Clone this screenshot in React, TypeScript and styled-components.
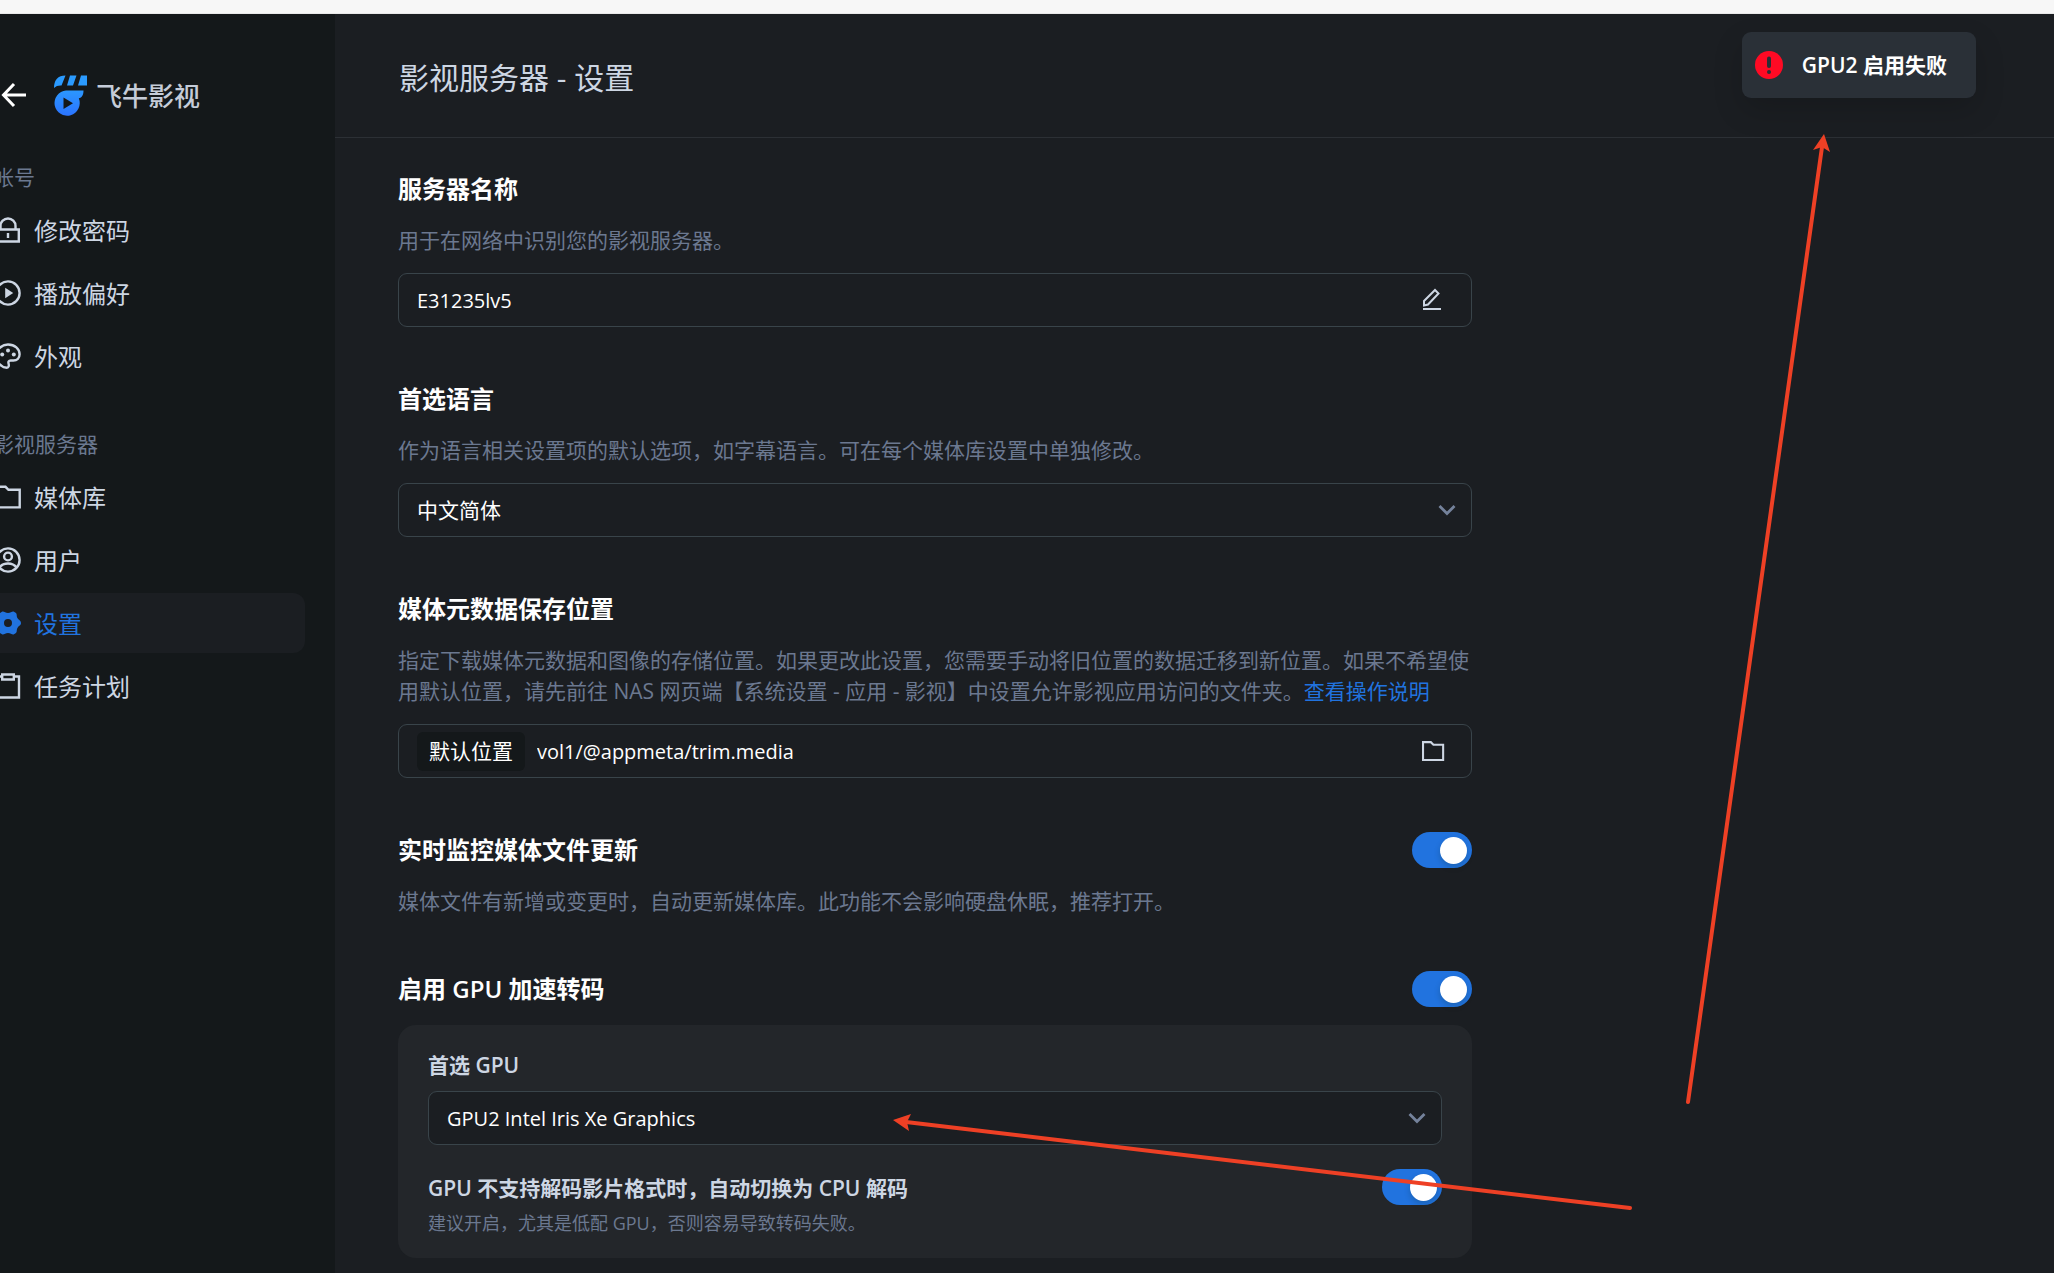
import React from "react";
import styled, { createGlobalStyle } from "styled-components";

const Global = createGlobalStyle`
  * { box-sizing: border-box; }
  body { margin: 0; background: #1b1e22; color: #fff; overflow: hidden;
    font-family: "Open Sans", "Noto Sans CJK SC", sans-serif; font-size: 21px; line-height: 31px; }
  h1, h2, p { margin: 0; }
`;

const Page = styled.div`
  position: relative;
  min-height: 100vh;
  display: flex;
  flex-direction: column;
`;
const TopStrip = styled.div`
  height: 14px;
  background: #f7f7f7;
  border-bottom: 1px solid #e9e9e9;
`;
const Shell = styled.div`
  flex: 1;
  display: flex;
  align-items: stretch;
`;
const Sidebar = styled.aside`
  flex: 0 0 335px;
  background: #14181a;
  overflow: hidden;
  padding-right: 30px;
`;
const Brand = styled.div`
  display: flex;
  align-items: center;
  height: 148px;
  padding-top: 14px;
`;
const IconButton = styled.button`
  display: flex;
  align-items: center;
  justify-content: center;
  flex: none;
  border: 0;
  padding: 0;
  background: none;
  color: #cdd6e3;
  cursor: pointer;
`;
const BackButton = styled(IconButton)`
  width: 28px;
  height: 28px;
  margin-right: 26px;
`;
const BrandName = styled.span`
  margin-left: 8px;
  padding-top: 3px;
  font-size: 26px;
  font-weight: 500;
  color: #c5ccd8;
`;
const Nav = styled.nav`
  display: flex;
  flex-direction: column;
  gap: 43px;
  margin-left: -25px;
`;
const NavGroup = styled.div`
  display: flex;
  flex-direction: column;
  gap: 3px;
`;
const NavLabel = styled.p`
  padding-left: 18px;
  margin-bottom: 4px;
  color: #6b7890;
`;
const NavItem = styled.a<{ $active?: boolean }>`
  display: flex;
  align-items: center;
  gap: 11px;
  height: 60px;
  padding-left: 18px;
  border-radius: 12px;
  font-size: 24px;
  text-decoration: none;
  color: ${(p) => (p.$active ? "#2173df" : "#cdd6e3")};
  background: ${(p) => (p.$active ? "#1b1e22" : "transparent")};
`;
const Main = styled.main`
  flex: 1;
  min-width: 0;
`;
const Header = styled.header`
  display: flex;
  align-items: center;
  height: 124px;
  padding: 4px 64px 0;
  border-bottom: 1px solid #2c3035;
`;
const Title = styled.h1`
  font-size: 30px;
  font-weight: 400;
  line-height: 44px;
  color: #cdd6e3;
`;
const Form = styled.form`
  display: flex;
  flex-direction: column;
  gap: 54px;
  max-width: 1200px;
  padding: 33px 63px 14px;
`;
const Section = styled.section`
  display: flex;
  flex-direction: column;
`;
const HeadRow = styled.div`
  display: flex;
  justify-content: space-between;
  align-items: center;
`;
const Heading = styled.label`
  font-size: 24px;
  font-weight: 600;
  line-height: 36px;
`;
const Desc = styled.p`
  margin-top: 18px;
  color: #6b7890;
`;
const Link = styled.a`
  color: #2173df;
  text-decoration: none;
`;
const Field = styled.div`
  display: flex;
  align-items: center;
  height: 54px;
  margin-top: 17px;
  padding: 0 25px 0 18px;
  border: 1px solid #39444a;
  border-radius: 9px;
  background: #1b1e22;
`;
const TextInput = styled.input`
  flex: 1;
  min-width: 0;
  height: 52px;
  padding: 0;
  border: 0;
  outline: 0;
  background: none;
  color: #fff;
  font: inherit;
  font-size: 20px;
`;
const SelectField = styled(Field)`
  padding: 0 13px 0 18px;
  color: #74829b;
`;
const NativeSelect = styled.select<{ $latin?: boolean }>`
  flex: 1;
  min-width: 0;
  height: 52px;
  padding: 0;
  border: 0;
  outline: 0;
  appearance: none;
  background: none;
  color: #fff;
  font: inherit;
  font-size: ${(p) => (p.$latin ? "20px" : "21px")};
`;
const Tag = styled.span`
  margin-right: 12px;
  padding: 4px 12px;
  border-radius: 6px;
  background: #14181a;
`;
const Toggle = styled.input`
  appearance: none;
  flex: none;
  display: flex;
  align-items: center;
  justify-content: flex-end;
  width: 60px;
  height: 36px;
  margin: 0;
  padding-right: 5px;
  border-radius: 18px;
  background: #2173df;
  cursor: pointer;
  &::before {
    content: "";
    width: 27px;
    height: 27px;
    border-radius: 50%;
    background: #fff;
    box-shadow: 0 3px 6px rgba(0, 35, 11, 0.2);
  }
  &:not(:checked) {
    justify-content: flex-start;
    padding-left: 5px;
    background: #454c55;
  }
`;
const Card = styled.div`
  margin-top: 18px;
  padding: 25px 30px 21px;
  border-radius: 18px;
  background: #23262a;
`;
const CardLabel = styled.label`
  display: block;
  font-weight: 600;
  color: #cdd6e3;
`;
const CardSelect = styled(SelectField)`
  margin-top: 10px;
`;
const CardRow = styled.div`
  display: flex;
  justify-content: space-between;
  align-items: flex-start;
  margin-top: 24px;
`;
const SwitchLabel = styled(CardLabel)`
  line-height: 38px;
`;
const Hint = styled.p`
  margin-top: 2px;
  font-size: 18px;
  line-height: 28px;
  color: #6b7890;
`;
const Toast = styled.div`
  position: absolute;
  top: 32px;
  right: 78px;
  display: flex;
  align-items: center;
  gap: 19px;
  height: 66px;
  padding: 0 29px 0 13px;
  border-radius: 9px;
  background: #2a3037;
  font-weight: 600;
  box-shadow: 0 12px 30px rgba(0, 0, 0, 0.16);
`;
const Annotations = styled.svg`
  position: absolute;
  inset: 0;
  width: 100%;
  height: 100%;
  pointer-events: none;
`;
const IconSvg = styled.svg`
  flex: none;
`;

type IconProps = { size?: number; children: React.ReactNode; width?: number };
const Icon = ({ size = 30, width = 2.4, children }: IconProps) => (
  <IconSvg width={size} height={size} viewBox="0 0 30 30" fill="none" stroke="currentColor" strokeWidth={width} aria-hidden="true">
    {children}
  </IconSvg>
);

const LockIcon = () => (
  <Icon><path d="M4.200 14.500h21.600v12H4.200zM7.500 14.500V11a7.500 7.500 0 0 1 15 0v3.500M15 18v5" /></Icon>
);
const PlayIcon = () => (
  <Icon><circle cx="15" cy="15" r="11.600" /><path d="M12.200 9.800l8 5.200-8 5.200z" fill="currentColor" stroke="none" /></Icon>
);
const PaletteIcon = () => (
  <Icon>
    <path d="M15 3.500C21.800 3.500 26.600 8 26.600 13.300c0 4-2.600 6.200-6.200 6.200h-2.800c-1.800 0-2.600 1.500-2 3.200.5 1.800.2 4-1.800 4C8 26.700 3.400 21 3.400 15 3.400 8.500 8.500 3.500 15 3.500z" />
    <g fill="currentColor" stroke="none"><circle cx="9.200" cy="13.500" r="2" /><circle cx="15" cy="9.500" r="2" /><circle cx="20.800" cy="13.500" r="2" /></g>
  </Icon>
);
const FolderIcon = ({ size = 30 }: { size?: number }) => (
  <Icon size={size}><path d="M3.500 4.800h9l3 3h11.200v17.600H3.500z" /></Icon>
);
const UserIcon = () => (
  <Icon><circle cx="15" cy="15" r="11.600" /><circle cx="15" cy="11.500" r="3.900" /><path d="M6.500 22.500c2-2.800 5-4 8.500-4s6.500 1.200 8.500 4" /></Icon>
);
const GearIcon = () => (
  <Icon>
    <path
      fillRule="evenodd"
      fill="currentColor"
      stroke="none"
      d="M9 3.700C10.800 2.800 12.200 5 15 5s4.200-2.200 6-1.300l1.600 1c1.800 1.200.6 3.400 2 5.600 1.400 2.300 3.400 2.200 3.400 4.700s-2 2.400-3.400 4.700c-1.400 2.200-.2 4.400-2 5.600l-1.600 1C19.200 27.200 17.800 25 15 25s-4.200 2.200-6 1.300l-1.600-1c-1.800-1.200-.6-3.400-2-5.600C4 17.400 2 17.500 2 15s2-2.400 3.400-4.700c1.400-2.200.2-4.400 2-5.600zM15 11a4 4 0 1 0 0 8 4 4 0 0 0 0-8z"
    />
  </Icon>
);
const ClipboardIcon = () => (
  <Icon><path d="M9 5.500H4v21h22v-21h-5M9.200 3.500h11.600v5H9.200z" /></Icon>
);
const Chevron = () => (
  <IconSvg width="22" height="22" viewBox="0 0 22 22" fill="none" stroke="currentColor" strokeWidth="2.800" aria-hidden="true">
    <path d="M3.500 7l7.500 7.500L18.500 7" />
  </IconSvg>
);
const Logo = () => (
  <IconSvg width="34" height="41" viewBox="0 0 34 41" aria-hidden="true">
    <defs>
      <linearGradient id="brand" x1="0" y1="0" x2="0" y2="1">
        <stop offset="0" stopColor="#2b97ff" />
        <stop offset="1" stopColor="#2b74ff" />
      </linearGradient>
    </defs>
    <path fill="#2b9bff" d="M0 13C0 5 4 .500 11.500.500L7.500 10.500C4.500 10.300 2 11 0 13zM16 .500h6.500l-3.500 10h-6zM27 .500h6v10h-9z" />
    <path fill="url(#brand)" fillRule="evenodd" d="M12 15.500h17.500c0 4.500-1.500 7-4.700 7.800A12.600 12.600 0 1 1 12 15.500zM9.500 22.500v11.500l9.500-5.800z" />
  </IconSvg>
);

const accountItems = [
  { icon: <LockIcon />, text: "修改密码" },
  { icon: <PlayIcon />, text: "播放偏好" },
  { icon: <PaletteIcon />, text: "外观" },
];
const serverItems = [
  { icon: <FolderIcon />, text: "媒体库" },
  { icon: <UserIcon />, text: "用户" },
  { icon: <GearIcon />, text: "设置", active: true },
  { icon: <ClipboardIcon />, text: "任务计划" },
];

function Group({ label, items }: { label: string; items: { icon: React.ReactNode; text: string; active?: boolean }[] }) {
  return (
    <NavGroup>
      <NavLabel>{label}</NavLabel>
      {items.map((it) => (
        <NavItem key={it.text} href="#" $active={it.active}>
          {it.icon}
          {it.text}
        </NavItem>
      ))}
    </NavGroup>
  );
}

export default function App() {
  return (
    <Page>
      <Global />
      <TopStrip />
      <Shell>
        <Sidebar>
          <Brand>
            <BackButton type="button" aria-label="返回">
              <svg width="28" height="28" viewBox="0 0 28 28" fill="none" stroke="#fff" strokeWidth="3">
                <path d="M14 3L3.500 14 14 25M3.500 14H26" />
              </svg>
            </BackButton>
            <Logo />
            <BrandName>飞牛影视</BrandName>
          </Brand>
          <Nav>
            <Group label="帐号" items={accountItems} />
            <Group label="影视服务器" items={serverItems} />
          </Nav>
        </Sidebar>
        <Main>
          <Header>
            <Title>影视服务器 - 设置</Title>
          </Header>
          <Form>
            <Section>
              <Heading htmlFor="name">服务器名称</Heading>
              <Desc>用于在网络中识别您的影视服务器。</Desc>
              <Field>
                <TextInput id="name" defaultValue="E31235lv5" />
                <IconButton type="button" aria-label="编辑">
                  <svg width="28" height="28" viewBox="0 0 28 28" fill="none" stroke="currentColor" strokeWidth="2">
                    <path d="M6 19.500v-4.500L17 4l3.500 3.500L10 18.500l-4 1zM5 23h18" />
                  </svg>
                </IconButton>
              </Field>
            </Section>
            <Section>
              <Heading htmlFor="lang">首选语言</Heading>
              <Desc>作为语言相关设置项的默认选项，如字幕语言。可在每个媒体库设置中单独修改。</Desc>
              <SelectField>
                <NativeSelect id="lang"><option>中文简体</option></NativeSelect>
                <Chevron />
              </SelectField>
            </Section>
            <Section>
              <Heading htmlFor="path">媒体元数据保存位置</Heading>
              <Desc>
                指定下载媒体元数据和图像的存储位置。如果更改此设置，您需要手动将旧位置的数据迁移到新位置。如果不希望使用默认位置，请先前往 NAS 网页端【系统设置 - 应用 - 影视】中设置允许影视应用访问的文件夹。<Link href="#">查看操作说明</Link>
              </Desc>
              <Field>
                <Tag>默认位置</Tag>
                <TextInput id="path" defaultValue="vol1/@appmeta/trim.media" />
                <IconButton type="button" aria-label="选择文件夹"><FolderIcon size={26} /></IconButton>
              </Field>
            </Section>
            <Section>
              <HeadRow>
                <Heading htmlFor="watch">实时监控媒体文件更新</Heading>
                <Toggle type="checkbox" id="watch" defaultChecked />
              </HeadRow>
              <Desc>媒体文件有新增或变更时，自动更新媒体库。此功能不会影响硬盘休眠，推荐打开。</Desc>
            </Section>
            <Section>
              <HeadRow>
                <Heading htmlFor="gpu">启用 GPU 加速转码</Heading>
                <Toggle type="checkbox" id="gpu" defaultChecked />
              </HeadRow>
              <Card>
                <CardLabel htmlFor="gpu-name">首选 GPU</CardLabel>
                <CardSelect>
                  <NativeSelect id="gpu-name" $latin><option>GPU2 Intel Iris Xe Graphics</option></NativeSelect>
                  <Chevron />
                </CardSelect>
                <CardRow>
                  <div>
                    <SwitchLabel htmlFor="cpu">GPU 不支持解码影片格式时，自动切换为 CPU 解码</SwitchLabel>
                    <Hint>建议开启，尤其是低配 GPU，否则容易导致转码失败。</Hint>
                  </div>
                  <Toggle type="checkbox" id="cpu" defaultChecked />
                </CardRow>
              </Card>
            </Section>
          </Form>
        </Main>
      </Shell>
      <Toast role="alert">
        <svg width="28" height="28" viewBox="0 0 28 28" aria-hidden="true">
          <circle cx="14" cy="14" r="14" fill="#ff0a24" />
          <path d="M14 7.500v7.500" stroke="#2a3037" strokeWidth="4" strokeLinecap="round" />
          <circle cx="14" cy="21" r="2" fill="#2a3037" />
        </svg>
        GPU2 启用失败
      </Toast>
      <Annotations aria-hidden="true">
        <g stroke="#ee4025" strokeWidth="4" strokeLinecap="round">
          <path d="M1688 1102L1822 147" />
          <path d="M1630 1208L906 1122" />
        </g>
        <g fill="#ee4025">
          <path d="M1824 134L1830 152L1822 147L1813 150z" />
          <path d="M893 1120L911 1114L907 1122L909 1131z" />
        </g>
      </Annotations>
    </Page>
  );
}
